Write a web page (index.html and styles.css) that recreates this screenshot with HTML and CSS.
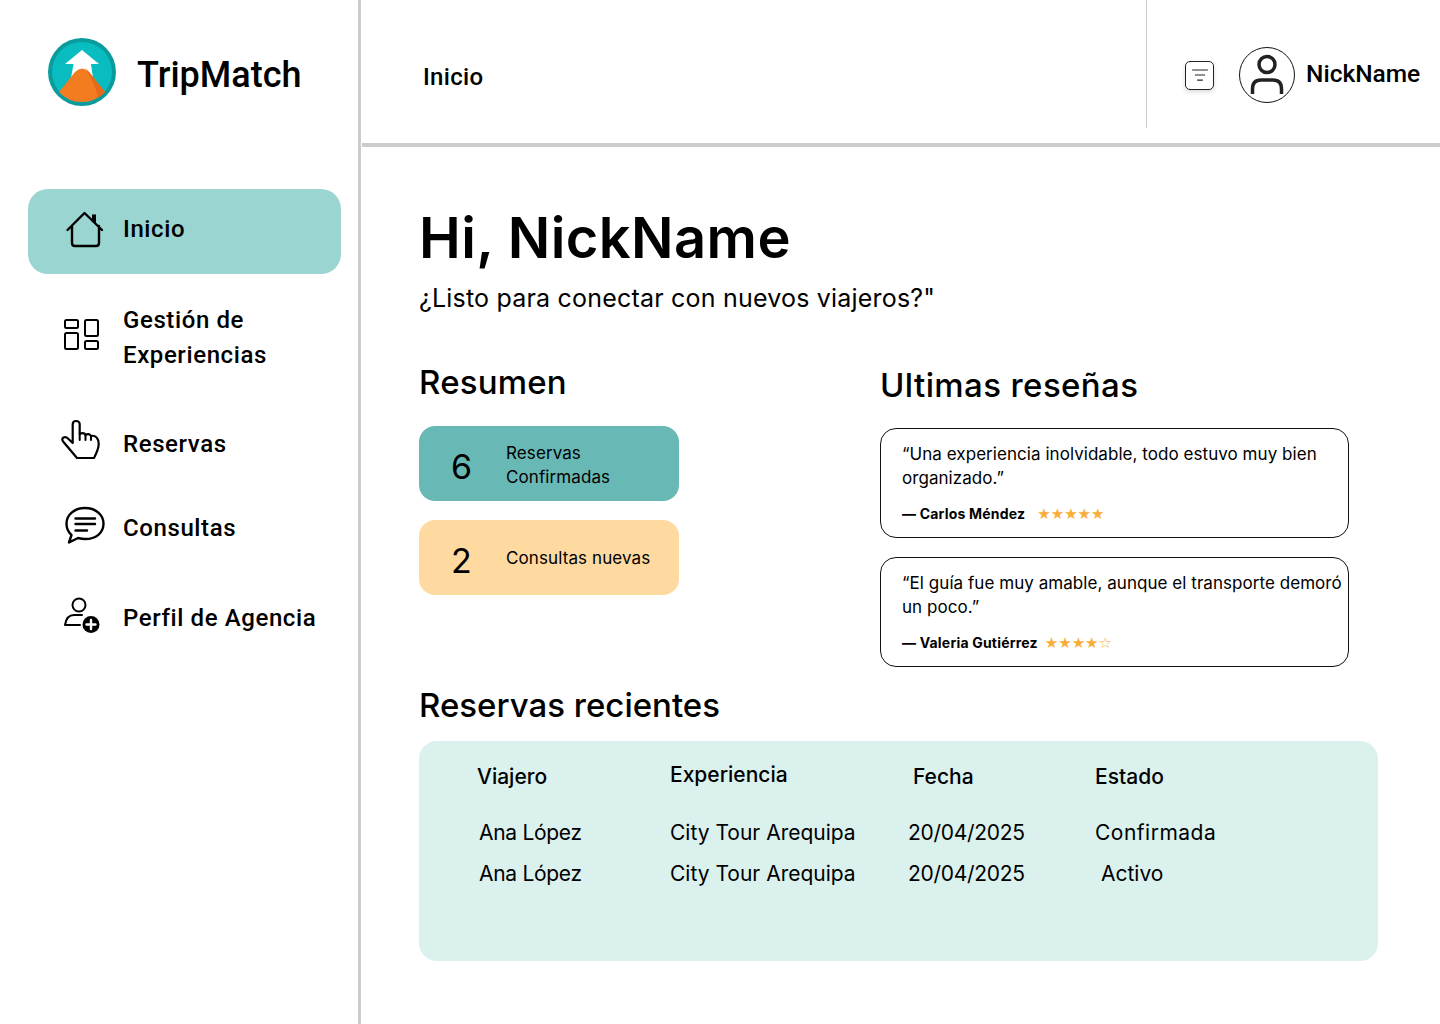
FILE: index.html
```html
<!DOCTYPE html>
<html lang="es">
<head>
	<meta charset="utf-8">
	<title>TripMatch</title>
	<link rel="stylesheet" href="styles.css">
</head>
<body>
<div class="page">

	<aside class="sidebar">
		<div class="brand">
			<svg class="brand-logo" viewBox="0 0 68 68" width="68" height="68">
				<circle cx="34" cy="34" r="34" fill="#0a9c9c"/>
				<circle cx="34" cy="34" r="30" fill="#08bcc0"/>
				<path d="M34 12 L51 26 L43 26 L45 40 L23 40 L25.5 26 L17 26 Z" fill="#fff"/>
				<path d="M11 54 L27 34 Q34 27 41 34 L57 54 Q47 64 34 64 Q20 64 11 54 Z" fill="#f37b20"/>
				<path d="M37 30 Q47 44 50 60 Q54 57 57 54 L41 34 Z" fill="#e56a1c"/>
			</svg>
			<span class="brand-name">TripMatch</span>
		</div>

		<nav class="nav">
			<a class="nav-item active" href="#">
				<svg class="nav-icon" viewBox="0 0 40 40" width="40" height="40">
					<path d="M2.5 20 L19.5 3 L37 20 M7 16 V33 Q7 36 10 36 H31 Q34 36 34 33 V16" fill="none" stroke="#000" stroke-width="2.4" stroke-linecap="round" stroke-linejoin="round"/>
					<path d="M27 4.5 H31 V15 L27 11 Z" fill="#000"/>
				</svg>
				<span>Inicio</span>
			</a>
			<a class="nav-item two" href="#">
				<svg class="nav-icon icon-grid" viewBox="0 0 40 40" width="40" height="40">
					<g fill="none" stroke="#000" stroke-width="2">
						<rect x="5" y="5" width="13" height="8" rx="1.5"/>
						<rect x="5" y="18" width="13" height="16" rx="1.5"/>
						<rect x="25" y="5" width="13" height="16" rx="1.5"/>
						<rect x="25" y="26" width="13" height="8" rx="1.5"/>
					</g>
				</svg>
				<span>Gestión de<br>Experiencias</span>
			</a>
			<a class="nav-item item-reservas" href="#">
				<svg class="nav-icon icon-hand" viewBox="0 0 40 42" width="40" height="42">
					<path d="M12.700 24 V5.500 Q12.700 2 16 2 Q19.700 2 19.700 5.500 V15 Q24 13 25.500 16 Q29 14 31 17 Q35 16 37 19 Q38.700 21 38.700 25 Q38.700 30 34 39 H17 L3.500 23 Q1 20 3.500 18.500 Q6 17.500 8.500 20 L12.700 24" fill="none" stroke="#000" stroke-width="2.200" stroke-linejoin="round" stroke-linecap="round"/>
					<path d="M19.700 15 V21 M25.500 16 V21 M31 17 V21" fill="none" stroke="#000" stroke-width="2" stroke-linecap="round"/>
				</svg>
				<span>Reservas</span>
			</a>
			<a class="nav-item" href="#">
				<svg class="nav-icon icon-chat" viewBox="0 0 40 40" width="40" height="40">
					<path d="M20 2 C31 2 38.500 9 38.500 17.500 C38.500 27 31 33 20 33 C17 33 15 32.500 13 32 L4 36.500 L6.500 29 C3 26 1.500 22 1.500 17.500 C1.500 9 9 2 20 2 Z" fill="none" stroke="#000" stroke-width="2.400" stroke-linejoin="round"/>
					<path d="M10.500 12.500 H30 M10.500 18 H30 M10.500 24.500 H22" stroke="#000" stroke-width="2.400" stroke-linecap="round"/>
				</svg>
				<span>Consultas</span>
			</a>
			<a class="nav-item item-perfil" href="#">
				<svg class="nav-icon icon-user" viewBox="0 0 40 40" width="40" height="40">
					<circle cx="17" cy="10" r="6.500" fill="none" stroke="#000" stroke-width="2"/>
					<path d="M20 20 H12 Q4.500 20 3 30 H18" fill="none" stroke="#000" stroke-width="2" stroke-linecap="round" stroke-linejoin="round"/>
					<circle cx="29" cy="29.500" r="8.500" fill="#000"/>
					<path d="M29 25 V34 M24.500 29.500 H33.500" stroke="#fff" stroke-width="2.400" stroke-linecap="round"/>
				</svg>
				<span>Perfil de Agencia</span>
			</a>
		</nav>
	</aside>

	<div class="main">
		<header class="topbar">
			<div class="topbar-title">Inicio</div>
			<div class="topbar-user">
				<span class="filter-btn">
					<svg viewBox="0 0 16 12" width="18" height="14">
						<path d="M1 1.500 H15 M3.500 6 H12.500 M5.500 10.500 H10.500" stroke="#222" stroke-width="1" fill="none"/>
					</svg>
				</span>
				<span class="avatar">
					<svg viewBox="0 0 56 56" width="56" height="56">
						<circle cx="28" cy="28" r="27.500" fill="#fff" stroke="#111" stroke-width="1"/>
						<circle cx="28" cy="17.500" r="8" fill="none" stroke="#222" stroke-width="3.500"/>
						<path d="M13.500 47 V42 Q13.500 33 22 33 H34 Q42.500 33 42.500 42 V47" fill="none" stroke="#222" stroke-width="3.500"/>
					</svg>
				</span>
				<span class="user-name">NickName</span>
			</div>
		</header>

		<main class="content">
			<h1 class="hello">Hi, NickName</h1>
			<p class="tagline">¿Listo para conectar con nuevos viajeros?"</p>

			<div class="columns">
				<section class="col-summary">
					<h2 class="section-title">Resumen</h2>
					<div class="stat teal">
						<span class="stat-num">6</span>
						<span class="stat-label">Reservas<br>Confirmadas</span>
					</div>
					<div class="stat peach">
						<span class="stat-num">2</span>
						<span class="stat-label">Consultas nuevas</span>
					</div>
				</section>

				<section class="col-reviews">
					<h2 class="section-title">Ultimas reseñas</h2>
					<div class="review">
						<p>“Una experiencia inolvidable, todo estuvo muy bien organizado.”</p>
						<div class="review-by"><b>— Carlos Méndez</b><span class="stars gap">★★★★★</span></div>
					</div>
					<div class="review">
						<p>“El guía fue muy amable, aunque el transporte demoró un poco.”</p>
						<div class="review-by"><b>— Valeria Gutiérrez</b><span class="stars">★★★★☆</span></div>
					</div>
				</section>
			</div>

			<h2 class="section-title recent">Reservas recientes</h2>
			<div class="table">
				<div class="th">Viajero</div>
				<div class="th th-exp">Experiencia</div>
				<div class="th th-date">Fecha</div>
				<div class="th">Estado</div>

				<div class="td td-name">Ana López</div>
				<div class="td">City Tour Arequipa</div>
				<div class="td td-date">20/04/2025</div>
				<div class="td td-conf">Confirmada</div>

				<div class="td td-name">Ana López</div>
				<div class="td">City Tour Arequipa</div>
				<div class="td td-date">20/04/2025</div>
				<div class="td td-state">Activo</div>
			</div>
		</main>
	</div>

</div>
</body>
</html>
```

FILE: styles.css
```css
* {
	box-sizing: border-box;
}

body {
	margin: 0;
	background: #fff;
	color: #000;
	font-family: "Inter", "Noto Sans", sans-serif;
}

.page {
	display: flex;
	width: 1440px;
	height: 1024px;
	overflow: hidden;
}

/* sidebar */
.sidebar {
	width: 361px;
	flex: none;
	border-right: 3px solid #ccc;
	padding: 38px 17px 0 28px;
}

.brand {
	display: flex;
	align-items: center;
	gap: 21px;
	padding-left: 20px;
	height: 68px;
}

.brand-name {
	padding-top: 6px;
	font-family: "Roboto", sans-serif;
	font-weight: 500;
	font-size: 36px;
}

.nav {
	margin-top: 83px;
}

.nav-item {
	display: flex;
	align-items: center;
	gap: 18px;
	height: 84px;
	padding-left: 37px;
	border-radius: 20px;
	color: #000;
	text-decoration: none;
	font-family: "Roboto", sans-serif;
	font-weight: 500;
	font-size: 24px;
	letter-spacing: 0.6px;
	line-height: 35px;
}

.nav-item.active {
	height: 85px;
	padding-bottom: 4px;
	background: #9ad5d2;
}

.nav-item.two {
	height: 85px;
	margin-top: 21px;
}

.item-reservas {
	margin-top: 22px;
}

.item-perfil {
	margin-top: 6px;
}

.nav-icon {
	flex: none;
}

.icon-grid {
	margin: -6px 5px 0 -5px;
}

.icon-hand {
	margin: -8px 5px 0 -5px;
}

.icon-chat {
	margin-top: -4px;
}

.icon-user {
	margin: -6px 3px 0 -3px;
}

/* top bar */
.main {
	flex: 1;
	min-width: 0;
}

.topbar {
	display: flex;
	height: 147px;
	margin-left: 1px;
	border-bottom: 4px solid #ccc;
}

.topbar-title {
	flex: 1;
	padding: 62px 0 0 61px;
	font-family: "Roboto", sans-serif;
	font-weight: 500;
	font-size: 24px;
	letter-spacing: 0.3px;
	line-height: 30px;
}

.topbar-user {
	display: flex;
	align-items: center;
	width: 294px;
	height: 128px;
	padding: 22px 0 0 38px;
	border-left: 1px solid #ccc;
}

.filter-btn {
	display: flex;
	align-items: center;
	justify-content: center;
	width: 29px;
	height: 29px;
	border: 1px solid #222;
	border-radius: 5px;
	box-shadow: 0 2px 4px rgba(0, 0, 0, 0.15);
}

.avatar {
	display: flex;
	margin-left: 25px;
}

.user-name {
	margin: 0 0 3px 11px;
	font-family: "Roboto", sans-serif;
	font-weight: 500;
	font-size: 24.5px;
}

/* content */
.content {
	padding: 58px 0 0 58px;
}

.hello {
	margin: 0;
	font-size: 56px;
	font-weight: 600;
	line-height: 66px;
	letter-spacing: 0.4px;
}

.tagline {
	margin: 12px 0 0;
	font-size: 25px;
	letter-spacing: 0.2px;
	line-height: 30px;
	font-weight: 400;
}

.columns {
	display: flex;
	margin-top: 48px;
}

.col-summary {
	width: 461px;
	flex: none;
}

.col-reviews {
	width: 469px;
	flex: none;
}

.section-title {
	margin: 0;
	font-size: 33px;
	letter-spacing: 0.2px;
	font-weight: 500;
	line-height: 42px;
}

.col-summary .section-title {
	margin-bottom: 23px;
}

.col-reviews .section-title {
	margin: 3px 0 22px;
	letter-spacing: 0.4px;
}

.stat {
	display: flex;
	align-items: center;
	width: 260px;
	height: 75px;
	margin-bottom: 19px;
	border-radius: 16px;
}

.stat.teal {
	background: #68b8b6;
}

.stat.teal .stat-label {
	padding-top: 2px;
}

.stat.peach {
	background: #fed9a0;
}

.stat-num {
	width: 87px;
	padding: 6px 0 0 32px;
	font-size: 34px;
}

.stat-label {
	font-size: 17px;
	letter-spacing: 0.1px;
	line-height: 24px;
}

.review {
	height: 110px;
	margin-bottom: 19px;
	padding: 13px 0 0 21px;
	border: 1px solid #111;
	border-radius: 16px;
}

.review p {
	margin: 0;
	font-size: 17px;
	letter-spacing: 0.05px;
	line-height: 24px;
}

.review-by {
	margin-top: 14px;
	font-size: 14px;
	letter-spacing: 0.2px;
	line-height: 20px;
}

.review-by b {
	font-weight: 700;
}

.stars {
	margin-left: 7px;
	color: #f9ae3a;
	font-family: "DejaVu Sans", sans-serif;
	font-size: 15px;
	letter-spacing: 0;
}

.stars.gap {
	margin-left: 12px;
}

.recent {
	margin-top: -2px;
	letter-spacing: 0;
}

.table {
	display: grid;
	grid-template-columns: 193px 238px 187px 1fr;
	grid-template-rows: 56px 41px 41px;
	align-content: start;
	width: 959px;
	height: 220px;
	margin-top: 15px;
	padding: 21px 0 0 58px;
	background: #daf1ee;
	border-radius: 18px;
	font-size: 21px;
	line-height: 30px;
}

.th {
	font-weight: 500;
}

.th-exp {
	margin-top: -2px;
}

.th-date {
	padding-left: 5px;
}

.td-name {
	padding-left: 2px;
	letter-spacing: -0.3px;
}

.td-date {
	letter-spacing: -0.3px;
}

.td-conf {
	letter-spacing: 0.5px;
}

.td-state {
	padding-left: 6px;
}
```
